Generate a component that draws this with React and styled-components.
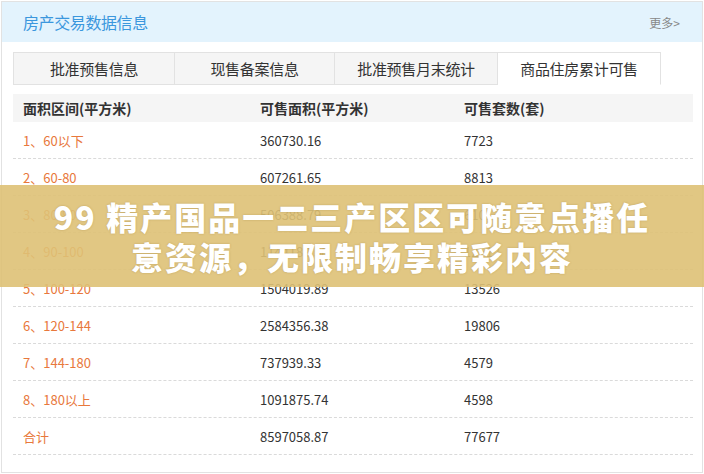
import React, { useState } from "react";
import styled, { createGlobalStyle } from "styled-components";

const GlobalStyle = createGlobalStyle`
    body {
        margin: 0;
        background: #ffffff;
        font-family: "Noto Sans CJK SC", "Noto Sans", sans-serif;
    }
`;

const Page = styled.div`
    position: relative;
    width: 704px;
    height: 474px;
    overflow: hidden;
`;

const Box = styled.div`
    margin: 1px;
    width: 700px;
    height: 470px;
    border: 1px solid #e2e2e2;
    background: #ffffff;
`;

const TitleBar = styled.div`
    display: flex;
    align-items: center;
    justify-content: space-between;
    height: 40px;
    padding: 0 22px 0 21px;
    background: #e3f3fd;
`;

const Title = styled.div`
    font-size: 16px;
    color: #3b97dd;
    letter-spacing: -0.4px;
`;

const More = styled.a`
    font-size: 12px;
    color: #888888;
    text-decoration: none;
`;

const Tabs = styled.div`
    display: flex;
    margin: 10px 0 0 11px;
    height: 33px;
`;

const Tab = styled.div`
    display: flex;
    align-items: center;
    justify-content: center;
    width: ${(props) => props.w}px;
    box-sizing: border-box;
    font-size: 15px;
    letter-spacing: -0.3px;
    color: #333333;
    border: 1px solid #e2e2e2;
    border-left-width: ${(props) => (props.first ? 1 : 0)}px;
    border-bottom-color: ${(props) => (props.active ? "#ffffff" : "#e2e2e2")};
    background: ${(props) => (props.active ? "#ffffff" : "#f5f5f5")};
    cursor: pointer;
`;

const Table = styled.div`
    margin: 9px 0 0 11px;
    width: 680px;
`;

const Row = styled.div`
    display: grid;
    grid-template-columns: 237px 204px 1fr;
    align-items: center;
    height: ${(props) => (props.head ? 28 : 37)}px;
    box-sizing: border-box;
    padding-left: 10px;
    background: ${(props) => (props.head ? "#f5f5f5" : "transparent")};
    border-bottom: ${(props) => (props.head ? "none" : "1px dashed #dadada")};
    font-size: ${(props) => (props.head ? 14 : 13)}px;
    font-weight: ${(props) => (props.head ? 700 : 400)};
    color: #333333;
`;

const Range = styled.span`
    color: #e8783c;
`;

const Banner = styled.div`
    position: absolute;
    left: 0;
    right: 0;
    top: 185px;
    height: 102px;
    display: flex;
    align-items: center;
    justify-content: center;
    background: rgba(222, 193, 118, 0.9);
`;

const BannerText = styled.div`
    width: 604px;
    text-align: center;
    font-size: 32px;
    line-height: 40px;
    letter-spacing: 2px;
    font-weight: 900;
    color: #ffffff;
    text-shadow: 0 0 2px rgba(120, 90, 30, 0.35);
`;

const tabs = ["批准预售信息", "现售备案信息", "批准预售月末统计", "商品住房累计可售"];
const widths = [162, 160, 163, 163];

const rows = [
    ["1、60以下", "360730.16", "7723"],
    ["2、60-80", "607261.65", "8813"],
    ["3、80-90", "506388.79", "6101"],
    ["4、90-100", "1144189.58", "12512"],
    ["5、100-120", "1504019.89", "13526"],
    ["6、120-144", "2584356.38", "19806"],
    ["7、144-180", "737939.33", "4579"],
    ["8、180以上", "1091875.74", "4598"],
    ["合计", "8597058.87", "77677"],
];

export default function App() {
    const [active, setActive] = useState(3);

    return (
        <Page>
            <GlobalStyle />
            <Box>
                <TitleBar>
                    <Title>房产交易数据信息</Title>
                    <More href="#">更多&gt;</More>
                </TitleBar>
                <Tabs>
                    {tabs.map((t, i) => (
                        <Tab
                            key={t}
                            w={widths[i]}
                            first={i === 0}
                            active={i === active}
                            onClick={() => setActive(i)}
                        >
                            {t}
                        </Tab>
                    ))}
                </Tabs>
                <Table>
                    <Row head>
                        <span>面积区间(平方米)</span>
                        <span>可售面积(平方米)</span>
                        <span>可售套数(套)</span>
                    </Row>
                    {rows.map((r) => (
                        <Row key={r[0]}>
                            <Range>{r[0]}</Range>
                            <span>{r[1]}</span>
                            <span>{r[2]}</span>
                        </Row>
                    ))}
                </Table>
            </Box>
            <Banner>
                <BannerText>99 精产国品一二三产区区可随意点播任意资源，无限制畅享精彩内容</BannerText>
            </Banner>
        </Page>
    );
}
